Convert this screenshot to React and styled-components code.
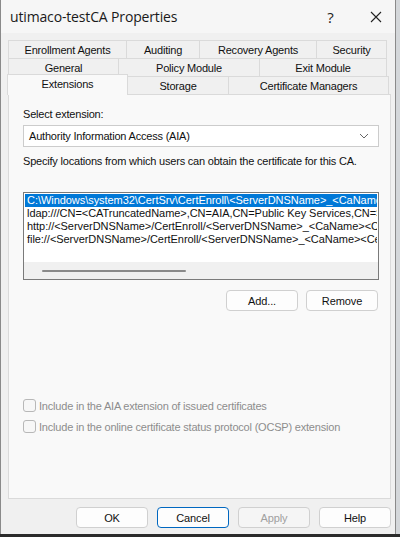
import React from 'react';
import styled, { createGlobalStyle } from 'styled-components';

const Global = createGlobalStyle`
  html, body {
    margin: 0;
    padding: 0;
    background: #2b2b2b;
  }
  body {
    width: 400px;
    height: 537px;
    overflow: hidden;
    font-family: "Liberation Sans", Arial, sans-serif;
  }
`;

const Desk = styled.div`
  display: flex;
  width: 400px;
  height: 534px;
  background: #d4d7da;
`;

const Window = styled.div`
  width: 394px;
  height: 534px;
  border: 1px solid #8a8a8a;
  border-top: none;
  border-bottom: none;
  background: #f0f0f0;
  display: flex;
  flex-direction: column;
  color: #000;
`;

const TitleBar = styled.div`
  height: 33px;
  display: flex;
  align-items: center;
  background: #f6f6f6;
  padding-left: 9px;
`;

const Title = styled.div`
  flex: 1;
  font-family: "Open Sans", "Liberation Sans", sans-serif;
  font-size: 14px;
  letter-spacing: -0.15px;
  color: #1a1a1a;
`;

const Caption = styled.div`
  width: ${({ w }) => w}px;
  margin-right: ${({ gap }) => gap || 0}px;
  height: 33px;
  display: flex;
  align-items: center;
  justify-content: center;
  font-family: "Open Sans", "Liberation Sans", sans-serif;
  font-size: 15px;
  color: #222;
`;

const TabStrip = styled.div`
  margin: 7px 0 0 6px;
  width: 382px;
  display: flex;
  flex-direction: column;
`;

const TabRow = styled.div`
  display: flex;
  padding-left: ${({ inset }) => inset}px;
  height: 18px;
  align-items: flex-end;
`;

const Tab = styled.div`
  width: ${({ w }) => w}px;
  height: 18px;
  box-sizing: border-box;
  border: 1px solid #dadada;
  border-left: ${({ first }) => (first ? '1px solid #dadada' : 'none')};
  border-bottom: none;
  background: #f0f0f0;
  display: flex;
  align-items: center;
  justify-content: center;
  padding-top: 1px;
  font-size: 11px;
  letter-spacing: -0.2px;
  color: #111;
`;

const ActiveTab = styled.div`
  width: ${({ w }) => w}px;
  height: 21px;
  box-sizing: border-box;
  border: 1px solid #dadada;
  border-bottom: none;
  background: #f9f9f9;
  display: flex;
  align-items: flex-start;
  justify-content: center;
  padding-top: 3px;
  margin-bottom: -1px;
  position: relative;
  z-index: 1;
  font-size: 11px;
  letter-spacing: -0.2px;
  color: #111;
`;

const Panel = styled.div`
  margin-left: 7px;
  width: 383px;
  height: 405px;
  box-sizing: border-box;
  border: 1px solid #dadada;
  background: #f9f9f9;
  padding: 11px 0 0 14px;
  display: flex;
  flex-direction: column;
  font-size: 11px;
  letter-spacing: -0.2px;
`;

const Label = styled.div`
  height: 17px;
  line-height: 17px;
  white-space: nowrap;
  margin-top: ${({ top }) => top || 0}px;
  color: #111;
`;

const Select = styled.div`
  margin-top: 2px;
  width: 356px;
  height: 22px;
  box-sizing: border-box;
  border: 1px solid #cccccc;
  background: #fff;
  display: flex;
  align-items: center;
  padding: 0 9px 0 5px;
  color: #111;
`;

const SelectText = styled.div`
  flex: 1;
`;

const ListBox = styled.div`
  margin-top: 22px;
  width: 356px;
  height: 88px;
  box-sizing: border-box;
  border: 1px solid #7a7a7a;
  background: #fff;
  padding: 1px 1px 0 1px;
  display: flex;
  flex-direction: column;
  overflow: hidden;
`;

const Item = styled.div`
  height: 13px;
  line-height: 13px;
  white-space: nowrap;
  overflow: hidden;
  padding-left: 2px;
  font-size: 11px;
  letter-spacing: -0.05px;
  background: ${({ selected }) => (selected ? '#0078d7' : 'transparent')};
  color: ${({ selected }) => (selected ? '#fff' : '#111')};
`;

const Spacer = styled.div`
  flex: 1;
`;

const HScroll = styled.div`
  height: 17px;
  background: #f0f0f0;
  margin: 0 -1px;
  display: flex;
  align-items: center;
  padding-left: 18px;
`;

const Thumb = styled.div`
  width: 144px;
  height: 2px;
  background: #8a8a8a;
  border-radius: 1px;
`;

const ButtonRow = styled.div`
  display: flex;
  justify-content: flex-end;
  gap: 8px;
  width: 355px;
  margin-top: 10px;
`;

const Button = styled.div`
  width: 72px;
  height: 21px;
  box-sizing: border-box;
  border: 1px solid ${({ focused }) => (focused ? '#0067c0' : '#d0d0d0')};
  border-radius: 4px;
  background: ${({ disabled }) => (disabled ? '#f5f5f5' : '#fdfdfd')};
  display: flex;
  align-items: center;
  justify-content: center;
  font-size: 11px;
  letter-spacing: -0.1px;
  color: ${({ disabled }) => (disabled ? '#a0a0a0' : '#111')};
`;

const Checks = styled.div`
  margin-top: 88px;
  display: flex;
  flex-direction: column;
  gap: 8px;
`;

const Check = styled.div`
  display: flex;
  align-items: center;
  height: 13px;
  color: #8d8d8d;
`;

const Box = styled.div`
  width: 13px;
  height: 13px;
  box-sizing: border-box;
  border: 1px solid #b8b8b8;
  border-radius: 3px;
  background: #f7f7f7;
  margin-right: 3px;
`;

const Footer = styled.div`
  display: flex;
  justify-content: flex-end;
  gap: 9px;
  padding: 8px 4px 0 0;
`;

function Chevron() {
  return (
    <svg width="10" height="6" viewBox="0 0 10 6">
      <path d="M1 1 L5 5 L9 1" fill="none" stroke="#666" strokeWidth="1" />
    </svg>
  );
}

function CloseGlyph() {
  return (
    <svg width="12" height="12" viewBox="0 0 12 12">
      <path d="M1 1 L11 11 M11 1 L1 11" stroke="#222" strokeWidth="1.1" />
    </svg>
  );
}

const locations = [
  'C:\\Windows\\system32\\CertSrv\\CertEnroll\\<ServerDNSName>_<CaName><CertificateName>.crt',
  'ldap:///CN=<CATruncatedName>,CN=AIA,CN=Public Key Services,CN=Services,<ConfigurationContainer>',
  'http://<ServerDNSName>/CertEnroll/<ServerDNSName>_<CaName><CertificateName>.crt',
  'file://<ServerDNSName>/CertEnroll/<ServerDNSName>_<CaName><CertificateName>.crt',
];

export default function App() {
  return (
    <Desk>
      <Global />
      <Window>
        <TitleBar>
          <Title>utimaco-testCA Properties</Title>
          <Caption w={45} gap={4}>?</Caption>
          <Caption w={38}><CloseGlyph /></Caption>
        </TitleBar>

        <TabStrip>
          <TabRow inset={1}>
            <Tab first w={119}>Enrollment Agents</Tab>
            <Tab w={73}>Auditing</Tab>
            <Tab w={117}>Recovery Agents</Tab>
            <Tab w={70}>Security</Tab>
          </TabRow>
          <TabRow inset={1}>
            <Tab first w={111}>General</Tab>
            <Tab w={141}>Policy Module</Tab>
            <Tab w={127}>Exit Module</Tab>
          </TabRow>
          <TabRow inset={0}>
            <ActiveTab w={121}>Extensions</ActiveTab>
            <Tab w={101}>Storage</Tab>
            <Tab w={160}>Certificate Managers</Tab>
          </TabRow>
        </TabStrip>

        <Panel>
          <Label>Select extension:</Label>
          <Select>
            <SelectText>Authority Information Access (AIA)</SelectText>
            <Chevron />
          </Select>
          <Label top={6}>
            Specify locations from which users can obtain the certificate for this CA.
          </Label>

          <ListBox>
            {locations.map((loc, i) => (
              <Item key={loc} selected={i === 0}>{loc}</Item>
            ))}
            <Spacer />
            <HScroll>
              <Thumb />
            </HScroll>
          </ListBox>

          <ButtonRow>
            <Button>Add...</Button>
            <Button>Remove</Button>
          </ButtonRow>

          <Checks>
            <Check><Box />Include in the AIA extension of issued certificates</Check>
            <Check><Box />Include in the online certificate status protocol (OCSP) extension</Check>
          </Checks>
        </Panel>

        <Footer>
          <Button>OK</Button>
          <Button focused>Cancel</Button>
          <Button disabled>Apply</Button>
          <Button>Help</Button>
        </Footer>
      </Window>
    </Desk>
  );
}
